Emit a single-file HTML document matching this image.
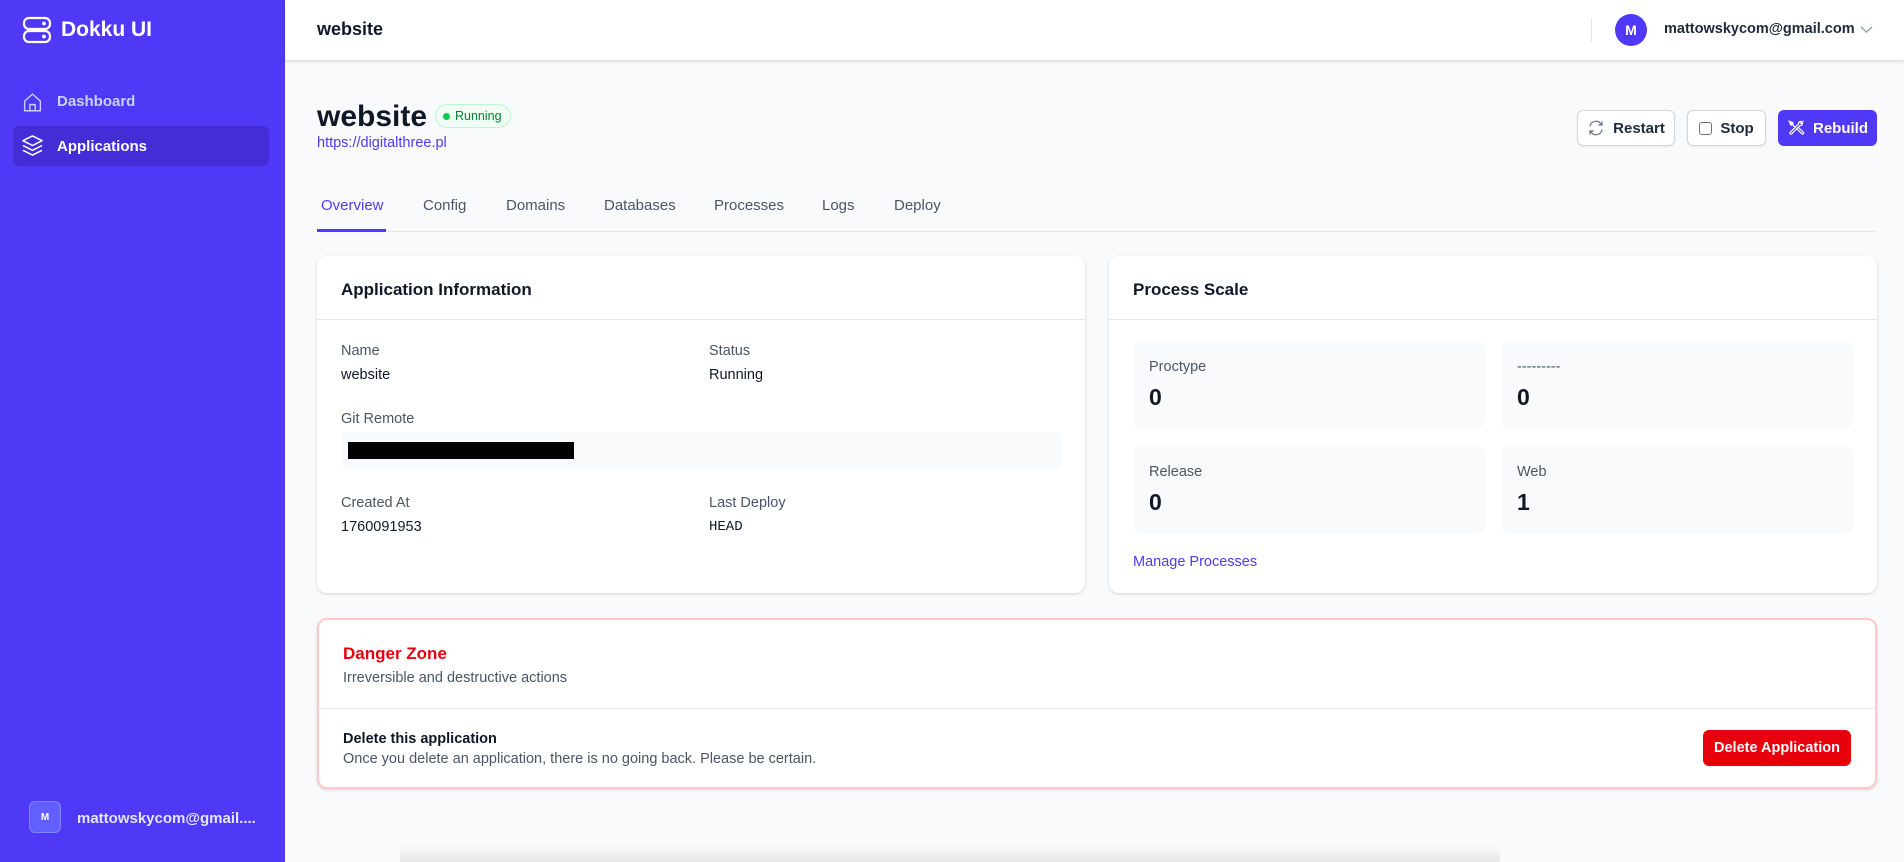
<!DOCTYPE html>
<html style="overflow:hidden;width:1904px;height:862px"><head><meta charset="utf-8"><style>
*{box-sizing:border-box;margin:0;padding:0}
body{width:1904px;height:862px;overflow:hidden;font-family:"Liberation Sans",Arial,sans-serif;background:#f9fafb;color:#101828;position:relative}
.abs{position:absolute}
.sb{left:0;top:0;width:285px;height:862px;background:#4f39f6}
.hdr{left:285px;top:0;width:1619px;height:61px;background:#fff;box-shadow:0 1px 3px rgba(0,0,0,.12);border-bottom:1px solid #e5e7eb}
.t{position:absolute;white-space:nowrap;line-height:1}
.card{position:absolute;background:#fff;border-radius:10px;box-shadow:0 1px 3px rgba(0,0,0,.1),0 1px 2px rgba(0,0,0,.06)}
.lbl{color:#4a5565;font-size:14.5px}
.val{color:#101828;font-size:14.5px}
.pbox{position:absolute;background:#f9fafb;border-radius:9px}
.btn{position:absolute;border-radius:6px;font-size:15px;font-weight:bold;display:flex;align-items:center;justify-content:center;gap:8px}
.tab{position:absolute;top:197px;font-size:15px;color:#4a5565}
</style></head><body>
<div class="abs sb"></div>
<svg class="abs" style="left:22px;top:16px" width="30" height="28" viewBox="0 0 30 28" fill="none" stroke="#fff" stroke-width="2.2"><rect x="2" y="2" width="26" height="11" rx="5"/><rect x="2" y="15" width="26" height="11" rx="5"/><circle cx="22" cy="7.5" r=".8" fill="#fff"/><circle cx="22" cy="20.5" r=".8" fill="#fff"/></svg>
<div class="t" style="left:61px;top:19px;font-size:21px;font-weight:bold;color:#fff">Dokku UI</div>
<svg class="abs" style="left:22px;top:91px" width="21" height="22" viewBox="0 0 24 24" fill="none" stroke="#c6d2ff" stroke-width="1.6"><path d="M3 11L12 3l9 8v11H3z"/><path d="M9 22v-7h6v7"/></svg>
<div class="t" style="left:57px;top:94px;font-size:15px;font-weight:bold;color:#c6d2ff">Dashboard</div>
<div class="abs" style="left:13px;top:126px;width:256px;height:40px;background:#432dd7;border-radius:6px"></div>
<svg class="abs" style="left:21px;top:134px" width="23" height="23" viewBox="0 0 24 24" fill="none" stroke="#fff" stroke-width="1.6" stroke-linejoin="round"><path d="M12 2L2 7l10 5 10-5z"/><path d="M2 12l10 5 10-5"/><path d="M2 17l10 5 10-5"/></svg>
<div class="t" style="left:57px;top:139px;font-size:15px;font-weight:bold;color:#fff">Applications</div>
<div class="abs" style="left:29px;top:801px;width:32px;height:32px;background:#615fff;border:1px solid #7c86ff;border-radius:6px;color:#fff;font-size:10px;font-weight:bold;display:flex;align-items:center;justify-content:center">M</div>
<div class="t" style="left:77px;top:811px;font-size:15px;font-weight:bold;color:#e0e7ff">mattowskycom@gmail....</div>

<div class="abs hdr"></div>
<div class="t" style="left:317px;top:20px;font-size:18px;font-weight:bold">website</div>
<div class="abs" style="left:1591px;top:18px;width:1px;height:24px;background:#e5e7eb"></div>
<div class="abs" style="left:1615px;top:14px;width:32px;height:32px;border-radius:50%;background:#4f39f6;color:#fff;font-size:14px;font-weight:bold;display:flex;align-items:center;justify-content:center">M</div>
<div class="t" style="left:1664px;top:22px;font-size:14.5px;font-weight:bold;color:#1e2939">mattowskycom@gmail.com</div>
<svg class="abs" style="left:1860px;top:25px" width="13" height="9" viewBox="0 0 13 9" fill="none" stroke="#99a1af" stroke-width="1.5"><path d="M1 2l5.5 5L12 2"/></svg>

<div class="t" style="left:317px;top:102px;font-size:30px;font-weight:bold;color:#101828">website</div>
<div class="abs" style="left:435px;top:104px;width:76px;height:24px;border-radius:12px;background:#f0fdf4;border:1px solid #b9f8cf;font-size:12.5px;color:#008236;display:flex;align-items:center;padding-left:7px;gap:5px"><span style="width:7px;height:7px;border-radius:50%;background:#00c950;display:inline-block"></span>Running</div>
<div class="t" style="left:317px;top:136px;font-size:14.5px;color:#4f39f6">https://digitalthree.pl</div>

<div class="btn" style="left:1577px;top:110px;width:98px;height:36px;background:#fff;border:1px solid #d1d5dc;color:#1e2939;box-shadow:0 1px 2px rgba(0,0,0,.06)"><svg width="18" height="18" viewBox="0 0 24 24" fill="none" stroke="#6a7282" stroke-width="1.6"><path d="M4 10a8 8 0 0 1 14.5-3.5L20 8M20 3v5h-5"/><path d="M20 14a8 8 0 0 1-14.5 3.5L4 16M4 21v-5h5"/></svg>Restart</div>
<div class="btn" style="left:1687px;top:110px;width:79px;height:36px;background:#fff;border:1px solid #d1d5dc;color:#1e2939;box-shadow:0 1px 2px rgba(0,0,0,.06)"><span style="width:13px;height:13px;border:1.5px solid #6a7282;border-radius:3px;display:inline-block"></span>Stop</div>
<div class="btn" style="left:1778px;top:110px;width:99px;height:36px;background:#4f39f6;color:#fff"><svg width="18" height="18" viewBox="0 0 24 24" fill="none" stroke="#fff" stroke-width="1.6"><path d="M3 3l8 8M3 3l2 5 3 0 0-3zM13 13l7 7a1.5 1.5 0 0 0 2-2l-7-7"/><path d="M20 3l-4 1-1 3-11 11a1.5 1.5 0 0 0 2 2l11-11 3-1 1-4-2 2-2-2z"/></svg>Rebuild</div>

<div class="abs" style="left:317px;top:231px;width:1560px;height:1px;background:#e5e7eb"></div>
<div class="abs" style="left:317px;top:229px;width:69px;height:3px;background:#4f39f6"></div>
<div class="tab" style="left:321px;color:#4f39f6">Overview</div>
<div class="tab" style="left:423px">Config</div>
<div class="tab" style="left:506px">Domains</div>
<div class="tab" style="left:604px">Databases</div>
<div class="tab" style="left:714px">Processes</div>
<div class="tab" style="left:822px">Logs</div>
<div class="tab" style="left:894px">Deploy</div>

<div class="card" style="left:317px;top:256px;width:768px;height:337px">
 <div class="t" style="left:24px;top:25px;font-size:17px;font-weight:bold">Application Information</div>
 <div class="abs" style="left:0;top:63px;width:100%;height:1px;background:#e5e7eb"></div>
 <div class="t lbl" style="left:24px;top:88px">Name</div>
 <div class="t val" style="left:24px;top:112px">website</div>
 <div class="t lbl" style="left:392px;top:88px">Status</div>
 <div class="t val" style="left:392px;top:112px">Running</div>
 <div class="t lbl" style="left:24px;top:156px">Git Remote</div>
 <div class="abs" style="left:24px;top:176px;width:720px;height:37px;background:#f9fafb;border-radius:5px"></div>
 <div class="abs" style="left:31px;top:186px;width:226px;height:17px;background:#000"></div>
 <div class="t lbl" style="left:24px;top:240px">Created At</div>
 <div class="t val" style="left:24px;top:264px">1760091953</div>
 <div class="t lbl" style="left:392px;top:240px">Last Deploy</div>
 <div class="t val" style="left:392px;top:264px;font-family:'Liberation Mono',monospace;font-size:14px">HEAD</div>
</div>

<div class="card" style="left:1109px;top:256px;width:768px;height:337px">
 <div class="t" style="left:24px;top:25px;font-size:17px;font-weight:bold">Process Scale</div>
 <div class="abs" style="left:0;top:63px;width:100%;height:1px;background:#e5e7eb"></div>
 <div class="pbox" style="left:24px;top:85px;width:352px;height:88px"><div class="t lbl" style="left:16px;top:19px">Proctype</div><div class="t" style="left:16px;top:45px;font-size:23px;font-weight:bold">0</div></div>
 <div class="pbox" style="left:392px;top:85px;width:352px;height:88px"><div class="t lbl" style="left:16px;top:19px">---------</div><div class="t" style="left:16px;top:45px;font-size:23px;font-weight:bold">0</div></div>
 <div class="pbox" style="left:24px;top:190px;width:352px;height:88px"><div class="t lbl" style="left:16px;top:19px">Release</div><div class="t" style="left:16px;top:45px;font-size:23px;font-weight:bold">0</div></div>
 <div class="pbox" style="left:392px;top:190px;width:352px;height:88px"><div class="t lbl" style="left:16px;top:19px">Web</div><div class="t" style="left:16px;top:45px;font-size:23px;font-weight:bold">1</div></div>
 <div class="t" style="left:24px;top:299px;font-size:14.5px;color:#4f39f6">Manage Processes</div>
</div>

<div class="card" style="left:317px;top:618px;width:1560px;height:171px;border:2px solid #ffc9c9">
 <div class="t" style="left:24px;top:25px;font-size:17px;font-weight:bold;color:#e7000b">Danger Zone</div>
 <div class="t lbl" style="left:24px;top:51px">Irreversible and destructive actions</div>
 <div class="abs" style="left:0;top:88px;width:100%;height:1px;background:#e5e7eb"></div>
 <div class="t" style="left:24px;top:112px;font-size:14.5px;font-weight:bold;color:#101828">Delete this application</div>
 <div class="t lbl" style="left:24px;top:132px">Once you delete an application, there is no going back. Please be certain.</div>
</div>
<div class="btn" style="left:1703px;top:730px;width:148px;height:36px;background:#e7000b;color:#fff;font-size:14.5px">Delete Application</div>
<div class="abs" style="left:400px;top:845px;width:1100px;height:17px;background:linear-gradient(rgba(0,0,0,0),rgba(0,0,0,.07))"></div>
</body></html>
